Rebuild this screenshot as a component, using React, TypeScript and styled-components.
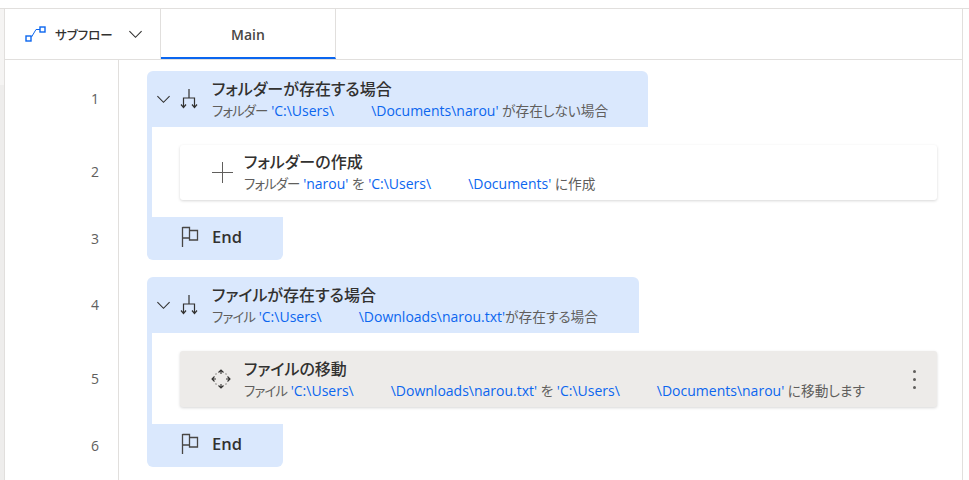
import styled, { createGlobalStyle } from "styled-components";

const GlobalStyle = createGlobalStyle`
  html, body {
    margin: 0;
    padding: 0;
    background: #fff;
    overflow: hidden;
  }
  body {
    font-family: "Open Sans", "Noto Sans CJK JP", sans-serif;
    font-feature-settings: "palt";
    color: #323130;
  }
`;

const Page = styled.div`
  width: 969px;
  height: 480px;
  padding-top: 8px;
  box-sizing: border-box;
  overflow: hidden;
`;

const Shell = styled.div`
  display: flex;
  height: 472px;
  border-top: 1px solid #e1dfdd;
`;

const Rail = styled.div`
  display: flex;
  flex-direction: column;
  width: 4px;
  background: #f5f4f3;
`;

const RailShade = styled.div`
  margin-top: 76px;
  flex: 1;
  background: #eeedec;
`;

const Frame = styled.div`
  width: 957px;
  border-left: 1px solid #e1dfdd;
  border-right: 1px solid #e1dfdd;
`;

const TabBar = styled.div`
  display: flex;
  height: 50px;
  border-bottom: 1px solid #e1dfdd;
`;

const SubflowButton = styled.div`
  display: flex;
  align-items: center;
  width: 156px;
  padding-left: 20px;
  box-sizing: border-box;
  font-size: 12.5px;
  font-weight: 500;
  border-right: 1px solid #e1dfdd;
`;

const SubflowLabel = styled.span`
  margin-left: 8px;
  width: 73px;
`;

const Tab = styled.div`
  display: flex;
  align-items: center;
  justify-content: center;
  width: 175px;
  padding-top: 2px;
  box-sizing: border-box;
  font-size: 14px;
  font-weight: 600;
  color: #484644;
  border-right: 1px solid #e1dfdd;
  border-bottom: 2px solid #0b66ef;
`;

const Canvas = styled.div`
  display: flex;
  flex-direction: column;
  position: relative;
  height: 420px;
  padding-top: 11px;
  box-sizing: border-box;
`;

const Gutter = styled.div`
  position: absolute;
  left: 113px;
  top: 0;
  bottom: 0;
  width: 1px;
  background: #e1dfdd;
`;

const Row = styled.div<{ $height: number; $gapAfter?: number }>`
  display: flex;
  height: ${(p) => p.$height}px;
  margin-bottom: ${(p) => p.$gapAfter ?? 0}px;
`;

const LineNumber = styled.div`
  display: flex;
  align-items: center;
  justify-content: flex-end;
  width: 94px;
  margin-right: 48px;
  padding-bottom: 1px;
  box-sizing: border-box;
  font-size: 14px;
  color: #605e5c;
`;

const BlockHeader = styled.div<{ $width: number }>`
  display: flex;
  align-items: center;
  width: ${(p) => p.$width}px;
  background: #dae8fd;
  border-radius: 6px 6px 0 0;
`;

const Chevron = styled.span`
  display: flex;
  margin-left: 9px;
`;

const HeaderIcon = styled.span`
  display: flex;
  margin-left: 9px;
`;

const Texts = styled.div<{ $left: number }>`
  display: flex;
  flex-direction: column;
  margin-left: ${(p) => p.$left}px;
`;

const Title = styled.div`
  font-size: 16px;
  line-height: 22px;
  font-weight: 500;
  color: #323130;
  white-space: nowrap;
`;

const Detail = styled.div`
  margin-top: 1px;
  font-size: 13.7px;
  line-height: 20px;
  color: #605e5c;
  white-space: nowrap;
`;

const Lead = styled.span`
  font-size: 13.4px;
  letter-spacing: -0.8px;
`;

const Path = styled.span`
  font-size: 14px;
  color: #0b66ef;
`;

const Mask = styled.span<{ $width: number }>`
  display: inline-block;
  width: ${(p) => p.$width}px;
`;

const BlockBody = styled.div`
  display: flex;
  flex: 1;
  padding: 18px 25px 17px 28px;
  border-left: 5px solid #dae8fd;
`;

const Card = styled.div<{ $active?: boolean }>`
  display: flex;
  align-items: center;
  flex: 1;
  position: relative;
  background: ${(p) => (p.$active ? "#edebe9" : "#fff")};
  border-radius: 3px;
  box-shadow: 0 1px 3px rgba(0, 0, 0, 0.16);
`;

const CardIcon = styled.span<{ $left: number }>`
  display: flex;
  margin-left: ${(p) => p.$left}px;
`;

const MoreDots = styled.span`
  position: absolute;
  right: 21px;
  top: 19px;
  display: flex;
  flex-direction: column;
  gap: 5px;
`;

const Dot = styled.i`
  display: block;
  width: 3px;
  height: 3px;
  border-radius: 50%;
  background: #605e5c;
`;

const EndBlock = styled.div`
  display: flex;
  align-items: center;
  width: 136px;
  background: #dae8fd;
  border-radius: 0 0 6px 6px;
  padding: 0 0 4px 34px;
  box-sizing: border-box;
  font-size: 16.5px;
  font-weight: 600;
`;

const EndLabel = styled.span`
  margin-left: 13px;
`;

const SubflowIcon = () => (
  <svg width="22" height="16" viewBox="0 0 22 16" fill="none">
    <rect x="1" y="10" width="5" height="5" stroke="#0b66ef" strokeWidth="1.4" />
    <rect x="15" y="1" width="5" height="5" stroke="#0b66ef" strokeWidth="1.4" />
    <path d="M6.5 11 L11 3.5 H15" stroke="#0b66ef" strokeWidth="1" />
  </svg>
);

const ChevronDown = ({ size }: { size: number }) => (
  <svg width={size} height={size} viewBox="0 0 16 16" fill="none">
    <path d="M1.5 4.5 L8 11 L14.5 4.5" stroke="#323130" strokeWidth="1.2" />
  </svg>
);

const BranchIcon = () => (
  <svg width="18" height="22" viewBox="0 0 18 22" fill="none" stroke="#323130" strokeWidth="1.2">
    <path d="M9 1 V10 M3.5 19 V10 H14.5 V19" />
    <path d="M1 16.5 L3.5 19.5 L6 16.5 M12 16.5 L14.5 19.5 L17 16.5" />
  </svg>
);

const FlagIcon = () => (
  <svg width="18" height="22" viewBox="0 0 18 22" fill="none" stroke="#484644" strokeWidth="1.3">
    <path d="M1.5 1 V21 M1.5 1.5 H8.5 V14 H16.5 V4.5 H8.5 M1.5 12 H8.5" />
  </svg>
);

const PlusIcon = () => (
  <svg width="21" height="21" viewBox="0 0 21 21" fill="none" stroke="#605e5c" strokeWidth="1">
    <path d="M10.5 0 V21 M0 10.5 H21" />
  </svg>
);

const MoveIcon = () => (
  <svg width="20" height="20" viewBox="0 0 20 20" fill="none" stroke="#323130" strokeWidth="1.1">
    <path d="M7.5 3.5 L10 1 L12.5 3.5 M10 1 V5 M7.5 16.5 L10 19 L12.5 16.5 M10 19 V15" />
    <path d="M3.5 7.5 L1 10 L3.5 12.5 M1 10 H5 M16.5 7.5 L19 10 L16.5 12.5 M19 10 H15" />
    <path d="M5.5 4.5 L4.5 5.5 M14.5 4.5 L15.5 5.5 M4.5 14.5 L5.5 15.5 M15.5 14.5 L14.5 15.5" stroke="#8a8886" />
  </svg>
);

const App = () => {
  return (
    <Page>
      <GlobalStyle />
      <Shell>
        <Rail>
          <RailShade />
        </Rail>
        <Frame>
          <TabBar>
            <SubflowButton>
              <SubflowIcon />
              <SubflowLabel>サブフロー</SubflowLabel>
              <ChevronDown size={15} />
            </SubflowButton>
            <Tab>Main</Tab>
          </TabBar>
          <Canvas>
            <Gutter />
            <Row $height={56}>
              <LineNumber>1</LineNumber>
              <BlockHeader $width={501}>
                <Chevron><ChevronDown size={15} /></Chevron>
                <HeaderIcon><BranchIcon /></HeaderIcon>
                <Texts $left={14}>
                  <Title>フォルダーが存在する場合</Title>
                  <Detail>
                    <Lead>フォルダー</Lead> <Path>'C:\Users\<Mask $width={37} />\Documents\narou'</Path> が存在しない場合
                  </Detail>
                </Texts>
              </BlockHeader>
            </Row>
            <Row $height={90}>
              <LineNumber>2</LineNumber>
              <BlockBody>
                <Card>
                  <CardIcon $left={32}><PlusIcon /></CardIcon>
                  <Texts $left={11}>
                    <Title>フォルダーの作成</Title>
                    <Detail>
                      <Lead>フォルダー</Lead> <Path>'narou'</Path> を <Path>'C:\Users\<Mask $width={37} />\Documents'</Path> に作成
                    </Detail>
                  </Texts>
                </Card>
              </BlockBody>
            </Row>
            <Row $height={43} $gapAfter={17}>
              <LineNumber>3</LineNumber>
              <EndBlock>
                <FlagIcon />
                <EndLabel>End</EndLabel>
              </EndBlock>
            </Row>
            <Row $height={56}>
              <LineNumber>4</LineNumber>
              <BlockHeader $width={492}>
                <Chevron><ChevronDown size={15} /></Chevron>
                <HeaderIcon><BranchIcon /></HeaderIcon>
                <Texts $left={14}>
                  <Title>ファイルが存在する場合</Title>
                  <Detail>
                    <Lead>ファイル</Lead> <Path>'C:\Users\<Mask $width={37} />\Downloads\narou.txt'</Path>が存在する場合
                  </Detail>
                </Texts>
              </BlockHeader>
            </Row>
            <Row $height={91}>
              <LineNumber>5</LineNumber>
              <BlockBody>
                <Card $active>
                  <CardIcon $left={31}><MoveIcon /></CardIcon>
                  <Texts $left={13}>
                    <Title>ファイルの移動</Title>
                    <Detail>
                      <Lead>ファイル</Lead> <Path>'C:\Users\<Mask $width={37} />\Downloads\narou.txt'</Path> を <Path>'C:\Users\<Mask $width={37} />\Documents\narou'</Path> に移動します
                    </Detail>
                  </Texts>
                  <MoreDots><Dot /><Dot /><Dot /></MoreDots>
                </Card>
              </BlockBody>
            </Row>
            <Row $height={43}>
              <LineNumber>6</LineNumber>
              <EndBlock>
                <FlagIcon />
                <EndLabel>End</EndLabel>
              </EndBlock>
            </Row>
          </Canvas>
        </Frame>
      </Shell>
    </Page>
  );
};

export default App;
